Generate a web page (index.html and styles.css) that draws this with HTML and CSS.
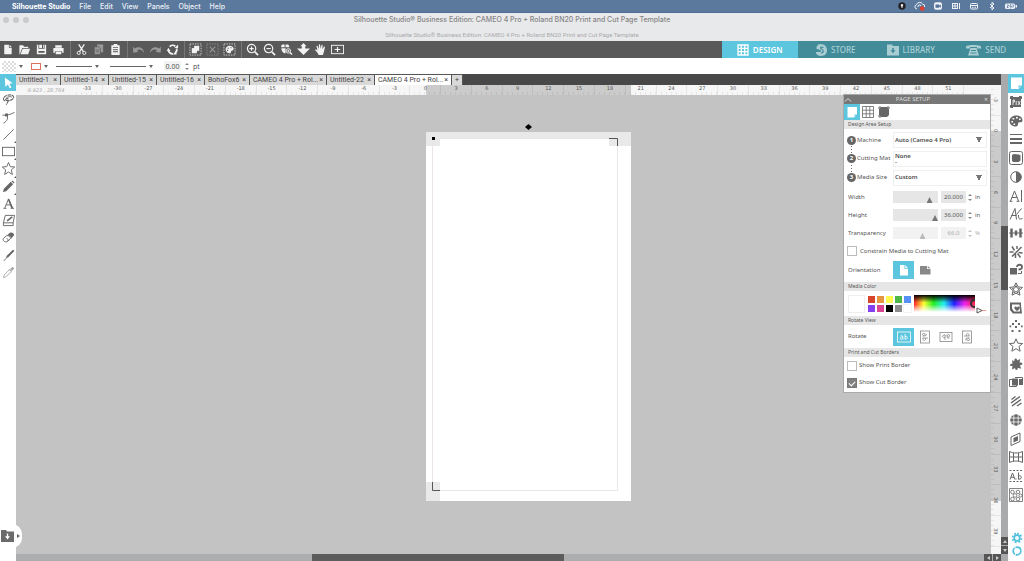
FILE: index.html
```html
<!DOCTYPE html>
<html lang="en">
<head>
<meta charset="utf-8">
<title>Silhouette Studio</title>
<link rel="stylesheet" href="styles.css">
</head>
<body>
<div class="app">
<header class="menubar">
  <nav class="menus">
    <button class="menu brand">Silhouette Studio</button><button class="menu">File</button><button class="menu">Edit</button><button class="menu">View</button><button class="menu">Panels</button><button class="menu">Object</button><button class="menu">Help</button>
  </nav>
  <div class="status">
    <svg viewBox="0 0 12 10"><circle class="ink" cx="6" cy="5" r="3.7"/><path class="f" d="M6 3a1.2 1.2 0 0 1 .7 2.2L6.400 7h-.8l-.3-1.800A1.200 1.200 0 0 1 6 3z"/></svg>
    <svg viewBox="0 0 12 10"><path d="M3 8a2.200 2.200 0 0 1-.5-4.300A3.300 3.300 0 0 1 8.500 3a2.400 2.400 0 0 1 2 3M4 6a1.500 1.500 0 0 1 3-1"/><circle class="red" cx="8.200" cy="7.500" r="2.300"/></svg>
    <svg viewBox="0 0 12 10"><rect class="f" x="2" y="1.200" width="8" height="7.600" rx="2"/><path class="navy" d="M3.500 3.500h3.500v1l1.800-1v3.200l-1.800-1v1H3.500z"/></svg>
    <svg viewBox="0 0 12 10"><rect class="f" x="2" y="2" width="6" height="6"/><path d="M9.500 2v6"/><path class="navy" d="M3 3h1.500v1.500H3zM5.500 3H7v1.500H5.500zM3 5.500h1.500V7H3zM5.500 5.500H7V7H5.500z"/></svg>
    <svg viewBox="0 0 12 10"><rect x="2.500" y="2.500" width="7" height="5.500" rx="1"/><path d="M2.500 4.500h7M4 6.300h1.500M6.500 6.300H8"/></svg>
    <svg viewBox="0 0 12 10"><path d="M4 3l4 4-2 1.800V1.200L8 3 4 7"/></svg>
    <svg class="battery" viewBox="0 0 14 10"><rect class="f" x="1" y="2.500" width="10" height="5.500" rx="1.500"/><path class="f" d="M11.500 4h1.500v2.500h-1.500z"/><path class="bolt" d="M3 4h1.500L3 6.500h1.500M7 3L5.800 5.300h1.700L6.500 7.500M8.500 4h1L8.800 6.500"/></svg>
  </div>
</header>
<div class="titlebar">
  <div class="lights"><i></i><i></i><i></i></div>
  <div class="titles">
    <h1>Silhouette Studio® Business Edition: CAMEO 4 Pro + Roland BN20 Print and Cut Page Template</h1>
    <p>Silhouette Studio® Business Edition: CAMEO 4 Pro + Roland BN20 Print and Cut Page Template</p>
  </div>
</div>
<div class="toolbar">
  <div class="tools">
    <div class="group">
      <button aria-label="New"><svg viewBox="0 0 14 14"><path class="f" d="M3.500 2h5v3h3v7h-8zM9.300 2l2.200 2.300H9.300z"/></svg></button>
      <button aria-label="Open"><svg viewBox="0 0 14 14"><path class="f" d="M1.500 12V2.500h4l1 1.500H11v1.500H4.500L2 12zM5 6.300h8L11 12H2.800z"/></svg></button>
      <button aria-label="Save"><svg viewBox="0 0 14 14"><path class="f" fill-rule="evenodd" d="M2 2h1.700v4.300h6.600V2H12v10H2zM3.700 8.500v2h6.600v-2zM4.500 2h3v3.500h-3zM8.700 2h.8v3.500h-.8z"/></svg></button>
      <button aria-label="Print"><svg viewBox="0 0 14 14"><path class="f" fill-rule="evenodd" d="M3.500 2.500h7V5h-7zM1.500 5.500h11v5h-1.700V8.800H3.200v1.700H1.500zM4 9.500h6V12H4z"/></svg></button>
    </div>
    <div class="group">
      <button aria-label="Cut"><svg viewBox="0 0 14 14"><path stroke-width="1.400" d="M4 1.500l5.200 8M10 1.500l-5.200 8"/><circle cx="4" cy="10.700" r="1.700"/><circle cx="10" cy="10.700" r="1.700"/></svg></button>
      <button class="dim" aria-label="Copy"><svg viewBox="0 0 14 14"><path class="f" d="M5.500 1.500H12v8.500H5.500z"/><path class="f edge" d="M2.500 4H7l2 2v6.500H2.500z"/><path class="edge" d="M4 7.500h3.500M4 9.500h3.500"/></svg></button>
      <button aria-label="Paste"><svg viewBox="0 0 14 14"><path class="f" fill-rule="evenodd" d="M5 1.200h4v1.300h2.500v10.300h-9V2.500H5zM4.300 4.500v1h5.400v-1zM4.300 6.700v1h5.400v-1zM4.300 9v1h5.400V9z"/></svg></button>
    </div>
    <div class="group">
      <button class="dim" aria-label="Undo"><svg viewBox="0 0 14 14"><path class="f" d="M1 4l.5 6.500 5.500-1.200L5.300 8c2.400-1.600 5-1.300 7.700 2.500C12.500 5 7.500 2.800 3 5.800z"/></svg></button>
      <button class="dim" aria-label="Redo"><svg viewBox="0 0 14 14"><path class="f" d="M13 4l-.5 6.500L7 9.300 8.700 8C6.300 6.400 3.700 6.700 1 10.500 1.500 5 6.500 2.800 11 5.800z"/></svg></button>
      <button aria-label="Sync"><svg viewBox="0 0 14 14"><path stroke-width="2" d="M4 4a4.300 4.300 0 0 1 6-.5M11.500 6a4.500 4.500 0 0 1-1.200 4.500M7.500 11.700A4.500 4.500 0 0 1 2.600 8"/><path class="f" d="M9 5.500h4V1.500zM11.500 12.500H7.500l3-4zM.8 8.500h4L2.500 5z"/></svg></button>
    </div>
    <div class="group">
      <button aria-label="Select all"><svg viewBox="0 0 14 14"><path class="dash" d="M1 1h12v12H1z"/><path class="f" d="M5.500 3h5.500v5.500H5.500z"/><path class="f" stroke="#595959" d="M3 5.500h5.500V11H3z"/></svg></button>
      <button class="dim" aria-label="Deselect"><svg viewBox="0 0 14 14"><path class="dash" d="M1 1h12v12H1z"/><path stroke-width="1.200" d="M4 4l6 6M10 4l-6 6"/></svg></button>
      <button aria-label="Select by color"><svg viewBox="0 0 14 14"><path class="dash" d="M1 1h12v12H1z"/><path class="f" fill-rule="evenodd" d="M7 3c3 0 4.500 1.500 4.500 3.500 0 1.500-1.200 1.800-2.300 1.800C8 8.500 9.500 11 7 11 4.500 11 2.800 9 2.800 7S4.500 3 7 3zM5 5v1.200h1.200V5zM8 4.500v1.200h1.200V4.500zM4.300 7.300v1.200h1.200V7.300z"/></svg></button>
    </div>
    <div class="group">
      <button aria-label="Zoom in"><svg viewBox="0 0 14 14"><circle cx="6" cy="6" r="4.500" stroke-width="1.300"/><path stroke-width="1.800" d="M9.500 9.500l3.500 3.500"/><path stroke-width="1.200" d="M6 3.700v4.600M3.700 6h4.600"/></svg></button>
      <button aria-label="Zoom out"><svg viewBox="0 0 14 14"><circle cx="6" cy="6" r="4.500" stroke-width="1.300"/><path stroke-width="1.800" d="M9.500 9.500l3.500 3.500"/><path stroke-width="1.200" d="M3.700 6h4.600"/></svg></button>
      <button aria-label="Zoom selection"><svg viewBox="0 0 14 14"><path class="f" d="M2.500 1.500H5v3.200H1.200C1.200 3 1.500 2 2.500 1.500zM6 1.500h2.500C9.600 2 10 3 10 4.700H6zM1.500 5.700H6V11H4.500C2.500 10 1.500 8 1.500 5.700z"/><circle cx="9" cy="8.500" r="2.400"/><path stroke-width="1.500" d="M10.700 10.200l2.300 2.300"/><path d="M7.800 8.500h2.400M9 7.300v2.400"/></svg></button>
      <button aria-label="Drag zoom"><svg viewBox="0 0 14 14"><path class="f" d="M7 0l3.300 3.500H8.800V6h5.200L7 13 0 6h5.200V3.500H3.700z"/></svg></button>
      <button aria-label="Pan"><svg viewBox="0 0 14 14"><path class="f" d="M5 13C4.300 10.500 2.500 9 1 7.500c.8-.9 1.800-.3 2.800.7L2.600 3.300c.8-.7 1.300-.2 1.500.5L5.300 6.500 5.200 1.700c.7-.7 1.300-.2 1.400.4l.6 4.200.9-4.200c.8-.5 1.300 0 1.200.7L9 6.800l1.800-3c.8-.3 1.200.2 1 .9C11 7 11 10 9.500 13z"/></svg></button>
      <button aria-label="Fit to window"><svg viewBox="0 0 14 14"><rect x=".5" y="2.500" width="13" height="9"/><path stroke-width="1.300" d="M7 4.300v5.400M4 7h6"/></svg></button>
    </div>
  </div>
  <nav class="modes">
    <a class="mode on" href="#design"><svg viewBox="0 0 12 12"><path stroke-width="1.300" d="M1 1h10v10H1zM4.300 1v10M7.700 1v10M1 4.300h10M1 7.700h10"/></svg>DESIGN</a>
    <a class="mode" href="#store"><svg viewBox="0 0 12 12"><path class="f" d="M5 0c5 0 7 3 7 6.300C12 10 9.300 12 6.200 12 3.300 12 1.200 10.500.700 8h4.200c1.500 0 1.700-1.500.2-2L1.500 4.800C1 3 3 0 5 0z"/><path class="tealstroke" d="M8.500 3.500C5.800 2.500 4.500 4 6.500 5s2.700 3.700-.5 4"/></svg>STORE</a>
    <a class="mode" href="#library"><svg viewBox="0 0 12 12"><path class="f" fill-rule="evenodd" d="M0 .5h5L6 2h6v9.500H0zM5.200 4v2.200H3.500L6 9.300l2.500-3.100H6.800V4z"/></svg>LIBRARY</a>
    <a class="mode" href="#send"><svg class="wide" viewBox="0 0 15 12"><path class="f" fill-rule="evenodd" d="M0 4.500V2.500C1.500.5 13.500.5 15 2.500v2h-4V3H4v1.500zM4.500 4h6l2.500 7.500H2zM5 6v1h5V6zM4.500 8.500v1h6v-1z"/></svg>SEND</a>
  </nav>
</div>
<div class="options">
  <button class="pattern" aria-label="Fill"></button><i class="caret"></i>
  <button class="linecolor" aria-label="Line color"></button><i class="caret"></i>
  <button class="line" aria-label="Line style"></button><i class="caret wide"></i>
  <button class="line" aria-label="Line weight"></button><i class="caret wide"></i>
  <input class="thick" id="thick" value="0.00"><span class="spin"><button aria-label="Up"></button><button aria-label="Down"></button></span><label for="thick">pt</label>
</div>
<div class="work">
  <aside class="left">
    <div class="lefttools">
      <button class="on" aria-label="Select"><svg viewBox="0 0 14 14"><path class="f" d="M3 1.500l8.500 6.300-3.600.5 2.200 4-1.700.8-2-4L3.600 11.500z"/></svg></button>
      <button aria-label="Lasso"><svg viewBox="0 0 14 14"><path stroke-width="1.200" d="M3.500 8.500C0 7.500 1.500 4 5 2.700S12.500 2 12.500 4.500 8.500 8.700 5.500 8.200 4 6 5.700 6s1.500 3.500-1.200 6.500" stroke-dasharray="4 .6"/><path d="M4.500 5.500C6 4 9 3.500 10.500 4.300"/></svg></button>
      <button aria-label="Edit points"><svg viewBox="0 0 14 14"><path d="M.5 4.500C5 4.500 9 4 13.500 1.500M5 4c2 3 1 7-3.500 9"/><path class="f" d="M3.300 2.700h3.200v3.200H3.300z"/></svg></button>
      <button class="more" aria-label="Line"><svg viewBox="0 0 14 14"><path d="M1.500 12.500l11-11"/></svg></button>
      <button class="more" aria-label="Rectangle"><svg viewBox="0 0 14 14"><rect x=".5" y="2.500" width="13" height="9"/></svg></button>
      <button class="more" aria-label="Star"><svg viewBox="0 0 14 14"><path d="M7 .5l1.900 4.500 4.800.4-3.700 3.100 1.200 4.900L7 10.800l-4.200 2.600L4 8.500.300 5.400 5.100 5z"/></svg></button>
      <button class="more" aria-label="Freehand"><svg viewBox="0 0 14 14"><path class="f" d="M1 13l1-3.500L9.500 2l2.500 2.500-7.500 7.500zM10.200 1.300l1-.8 2.300 2.300-.8 1z"/></svg></button>
      <button aria-label="Text"><svg viewBox="0 0 14 14"><path d="M3 12L7 2l4.500 10M4.500 8.500h5.300M1.500 12.200h3.200M9.300 12.200h3.700"/><path stroke-width="1.700" d="M7 2.500l3.900 9.500"/></svg></button>
      <button aria-label="Sketch"><svg viewBox="0 0 14 14"><path d="M3.500 1.500h10l-1.500 8H1.500zM1.500 9.500v3h10.500v-3"/><path stroke-width="1.800" d="M5.500 7.500l5.500-4.500"/></svg></button>
      <button aria-label="Eraser"><svg viewBox="0 0 14 14"><path class="f" d="M5.500 4.500L8.500 2c2-1 4.500.5 4.500 2.500l-3.500 4c1-2-1.500-4-4-4z"/><path d="M5 5L1.500 8c-1.500 2 1.500 4.500 4 3.500L9 8.500C9.500 6 7 4.500 5 5zM5 8c1.500.5 2 1.800 1 3"/></svg></button>
      <button aria-label="Knife"><svg viewBox="0 0 14 14"><path stroke-width="2.200" stroke-linecap="round" d="M12 2L6 8"/><path d="M7 6.500L4.500 10 2 12.800"/></svg></button>
      <button class="pale" aria-label="Eyedropper"><svg viewBox="0 0 14 14"><path d="M1.500 12.500l1-3L8 4l2 2-5.500 5.500zM7.500 3.500L10.500 6.500"/><path class="f" d="M8.500 3.300l2.300-2c1-.7 2.800.8 2 2L10.700 5.500z"/></svg></button>
    </div>
    <button class="drawer" aria-label="Open library"><svg viewBox="0 0 13 12"><path class="f" fill-rule="evenodd" d="M0 0h5l1 1.500h7V12H0zM5.800 3.500v2.700H4l2.500 3.300L9 6.200H7.200V3.500z"/></svg><i></i></button>
  </aside>
  <main class="center">
    <div class="doctabs">
      <button class="tab w1">Untitled-1<b>×</b></button><button class="tab w2">Untitled-14<b>×</b></button><button class="tab w2">Untitled-15<b>×</b></button><button class="tab w2">Untitled-16<b>×</b></button><button class="tab w1">BohoFox6<b>×</b></button><button class="tab w3">CAMEO 4 Pro + Rol...<b>×</b></button><button class="tab w2">Untitled-22<b>×</b></button><button class="tab w3 on">CAMEO 4 Pro + Rol...<b>×</b></button><button class="tab add">+</button>
    </div>
    <div class="hruler">
      <span class="coords">-9.923 , 28.764</span>
      <div class="hnums"><span>-33</span><span>-30</span><span>-27</span><span>-24</span><span>-21</span><span>-18</span><span>-15</span><span>-12</span><span>-9</span><span>-6</span><span>-3</span><span>0</span><span>3</span><span>6</span><span>9</span><span>12</span><span>15</span><span>18</span><span>21</span><span>24</span><span>27</span><span>30</span><span>33</span><span>36</span><span>39</span><span>42</span><span>45</span><span>48</span><span>51</span></div>
    </div>
    <div class="stage">
      <div class="canvas">
        <svg class="sheet" viewBox="0 0 206 378">
          <path class="white" d="M0 9h205v369H0z"/>
          <path class="shade" d="M0 9h205v14h-22v-7H14v7H0zM0 359h14v19H0z"/>
          <path class="cutline" d="M6.500 15.500h185v352H6.500z"/>
          <path class="black" d="M6 14h3v3H6z"/>
          <path class="mark" d="M183 15.500h8.500V23M6.500 359v8.500H14"/>
          <path class="black" d="M102.500 1l3.500 3-3.500 3-3.500-3z"/>
        </svg>
        <section class="panel">
          <header class="phead"><svg viewBox="0 0 8 6"><path d="M1 4.500L4 1.500l3 3"/></svg><h2>PAGE SETUP</h2><button aria-label="Close">×</button></header>
          <div class="ptabs">
            <button class="on" aria-label="Page"><svg viewBox="0 0 12 12"><path class="f" d="M1.500 1h9.500v7L8 11.500H1.500z"/><path class="cyan" d="M8 11V8h3"/></svg></button>
            <button aria-label="Grid"><svg viewBox="0 0 12 12"><path stroke-width=".8" d="M.5.5h11v11H.5zM4.200.5v11M7.800.5v11M.5 4.200h11M.5 7.800h11"/></svg></button>
            <button aria-label="Registration marks"><svg viewBox="0 0 12 12"><path class="f" d="M1 3l2-2h6l2 2v6l-2 2H3L1 9z"/><path d="M1 3V1h2M9 1h2v2M1 9v2h2"/></svg></button>
          </div>
          <h3>Design Area Setup</h3>
          <div class="fields">
            <div class="row"><label for="machine"><i class="num">1</i>Machine</label><select id="machine"><option>Auto (Cameo 4 Pro)</option></select></div>
            <div class="row tall dots"><label for="mat"><i class="num">2</i>Cutting Mat</label><button id="mat" class="mat">None<br>-</button></div>
            <div class="row tall dots"><label for="media"><i class="num">3</i>Media Size</label><select id="media"><option>Custom</option></select></div>
            <div class="row"><label for="w">Width</label><input type="range" aria-label="Width slider" value="86"><input class="val" id="w" value="20.000"><span class="spin"><button aria-label="Up"></button><button aria-label="Down"></button></span><span class="unit">in</span></div>
            <div class="row"><label for="h">Height</label><input type="range" aria-label="Height slider" value="100"><input class="val" id="h" value="36.000"><span class="spin"><button aria-label="Up"></button><button aria-label="Down"></button></span><span class="unit">in</span></div>
            <div class="row off"><label for="t">Transparency</label><input type="range" aria-label="Transparency slider" value="68" disabled><input class="val" id="t" value="66.0" disabled><span class="spin"><button aria-label="Up"></button><button aria-label="Down"></button></span><span class="unit">%</span></div>
            <div class="row check"><input type="checkbox" id="c1"><label for="c1">Constrain Media to Cutting Mat</label></div>
            <div class="row high"><span class="lab">Orientation</span><div class="picks"><button class="on" aria-label="Portrait"><svg viewBox="0 0 12 12"><path class="f" d="M2 1h4.500v4H10v6.500H2zM7.300 1L10 4.200H7.300z"/></svg></button><button aria-label="Landscape"><svg viewBox="0 0 12 12"><path class="f" d="M1 2h7v3h3.500v5.500H1zM8.800 2l2.700 2.200H8.800z"/></svg></button></div></div>
          </div>
          <h3>Media Color</h3>
          <div class="colors">
            <i class="current"></i>
            <div class="swatches"><i class="c1"></i><i class="c2"></i><i class="c3"></i><i class="c4"></i><i class="c5"></i><i class="c6"></i><i class="c7"></i><i class="c8"></i><i class="c9"></i><i class="c10"></i></div>
            <div class="spectrum"><i></i></div>
            <svg class="shadeslider" viewBox="0 0 12 20"><path d="M2 14v5l5-2.500z"/><path class="redline" d="M7 16.500h4"/></svg>
          </div>
          <h3>Rotate View</h3>
          <div class="row rotate"><span class="lab">Rotate</span><div class="picks">
            <button class="on" aria-label="0 degrees"><svg viewBox="0 0 14 14"><rect x=".5" y="2" width="13" height="10"/><path d="M3.500 6c2-1 2.500 0 2.500 3.500M6 7C4 6.500 3 7.500 3.500 9S6 8.500 6 8M8 4v5.500M8 6.500c3-1 3.500 3 0 2.500"/></svg></button>
            <button aria-label="90 degrees"><svg viewBox="0 0 14 14"><rect x="2.500" y="1" width="9" height="12"/><path d="M8 3.500c1 2 0 2.500-3.500 2.500M7 6c.5-2-.5-3-2-2.500S5.500 6 6 6M10 8H4.500M7.500 8c1 3-3 3.500-2.500 0"/></svg></button>
            <button aria-label="180 degrees"><svg viewBox="0 0 14 14"><rect x="1" y="2.500" width="12" height="9"/><path d="M10.500 8c-2 1-2.500 0-2.500-3.500M8 7c2 .5 3-.5 2.500-2S8 5.500 8 6M6 10V4.500M6 7.500c-3 1-3.500-3 0-2.500"/></svg></button>
            <button aria-label="270 degrees"><svg viewBox="0 0 14 14"><rect x="2.500" y="1" width="9" height="12"/><path d="M6 10.500C5 8.500 6 8 9.500 8M7 8c-.5 2 .5 3 2 2.500S8.500 8 8 8M4 6h5.500M6.500 6c-1-3 3-3.500 2.500 0"/></svg></button>
          </div></div>
          <h3>Print and Cut Borders</h3>
          <div class="row check"><input type="checkbox" id="c2"><label for="c2">Show Print Border</label></div>
          <div class="row check"><input type="checkbox" id="c3" checked><label for="c3">Show Cut Border</label></div>
        </section>
      </div>
    </div>
    <div class="hscroll"><i class="thumb"></i><span class="arrows"><button class="al" aria-label="Left"></button><button class="ar" aria-label="Right"></button></span></div>
  </main>
  <div class="vruler"><div class="vnums"><span>-3</span><span>0</span><span>3</span><span>6</span><span>9</span><span>12</span><span>15</span><span>18</span><span>21</span><span>24</span><span>27</span><span>30</span><span>33</span><span>36</span><span>39</span></div></div>
  <div class="vscroll"><i class="thumb"></i><span class="arrows"><button class="au" aria-label="Up"></button><button class="ad" aria-label="Down"></button></span></div>
  <aside class="right">
    <div class="righttools">
      <button class="on" aria-label="Page setup"><svg viewBox="0 0 14 14"><path class="f" d="M2 1.500h11V9l-3.500 4H2z"/><path class="cyan" d="M9 12.500V9h4"/></svg></button>
      <button aria-label="Pixscan"><svg viewBox="0 0 14 14"><path class="f" d="M2 2h10v10H2z"/><path d="M1.500 4V1.500H4M10 1.500h2.500V4M1.500 10v2.500H4"/><path class="w" d="M4 10V5h1.500v2H4M7.200 6v4M9 6l2.200 4M11.200 6L9 10"/></svg></button>
      <button aria-label="Fill"><svg viewBox="0 0 14 14"><path class="f" fill-rule="evenodd" d="M7 1.500c4 0 6.500 2 6.500 4.800 0 2-1.800 2.200-3.300 2-2 0 0 4.200-3.500 4.200C3 12.500.5 10 .5 7S3.500 1.500 7 1.500zM3.500 4v1.600h1.800V4zM7 3v1.600h1.800V3zM10 4.500v1.600h1.700V4.500zM2.300 7v1.600H4V7zM4.500 9.500V11h1.600V9.500z"/></svg></button>
      <button aria-label="Line style"><svg viewBox="0 0 14 14"><path d="M1 2.500h12"/><path stroke-width="2" d="M1 7h12"/><path stroke-width="2" d="M1 11h12"/></svg></button>
      <button aria-label="Trace"><svg viewBox="0 0 14 14"><rect x=".5" y=".5" width="13" height="13" rx="2"/><path class="f" d="M3 4l2-1 5 .5 1.500 1v5l-2 1.500H4L3 9.500z"/></svg></button>
      <button aria-label="Contrast"><svg viewBox="0 0 14 14"><circle cx="7" cy="7" r="5.300"/><path class="f" d="M7 1.700a5.300 5.300 0 0 1 0 10.600z"/></svg></button>
      <button aria-label="Text style"><svg viewBox="0 0 14 14"><path d="M1.500 12L5.500 2l4 10M3 8.500h5M.5 12.300h3M7.500 12.300h3M12.500 1v12"/></svg></button>
      <button aria-label="Sketch text"><svg viewBox="0 0 14 14"><path d="M1 12.500L6 1.500l1.500 11M2.500 8.500h5M7.500 7.500L12.500 1.500M9.500 8c0 3 0 5 4 3.500"/></svg></button>
      <button aria-label="Align"><svg viewBox="0 0 14 14"><path stroke-width="2.500" d="M2.500 2.500v9M7 4.500v5M11.500 2.500v9"/><path d="M0 7h14"/></svg></button>
      <button aria-label="Transform"><svg viewBox="0 0 14 14"><path stroke-width="1.500" d="M3 1.500l2.500 4M12.500 2L3 11.500M.5 7h4M9.500 7.500l4 .5M6.500 9v4M8.500 8.500l3 4M8 1v3"/></svg></button>
      <button aria-label="Replicate"><svg viewBox="0 0 14 14"><path class="f" d="M1 5h7v6.500H1z"/><path stroke-width="1.800" d="M8 4c0-3 5-3 5 0 0 2-2 2.500-3.500 2.500"/><path d="M9 10.500h3.500V8"/></svg></button>
      <button aria-label="Offset"><svg viewBox="0 0 14 14"><path d="M7 .8l2 4 4.500.7L10 8.700l1 4.500-4-2-4 2 1-4.500L.5 5.500 5 4.800z"/><path d="M7 3.500l1.200 2.500 2.500.5-1.900 1.800.4 2.500L7 9.500l-2.200 1.300.4-2.500-1.900-1.800L5.800 6z"/></svg></button>
      <button aria-label="Modify"><svg viewBox="0 0 14 14"><path class="f" fill-rule="evenodd" d="M1 1.500h11v3l1 8H4L1 9zM3 3.500v4l2 3h6l-.5-7z"/><path class="f" d="M8 10C5.500 8.500 4.500 6.500 6 5.700c1-.5 1.700.3 2 1 .3-.7 1.200-1.500 2.200-1C11.500 6.500 10.500 8.500 8 10z"/></svg></button>
      <button aria-label="Rhinestones"><svg viewBox="0 0 14 14"><path class="f" d="M6 1h2v2H6zM3 4h2v2H3zM9 4h2v2H9zM.500 6.500h1.700v1.700H.500zM12 6.500h1.700v1.700H12zM6 7h2v2H6zM2.500 11h2v2h-2zM9.500 11h2v2h-2z"/></svg></button>
      <button aria-label="Star"><svg viewBox="0 0 14 14"><path d="M7 .8l1.900 4.400 4.700.3-3.600 3 1.200 4.700L7 10.700l-4.200 2.500L4 8.500l-3.600-3 4.700-.3z"/></svg></button>
      <button aria-label="Puzzle"><svg viewBox="0 0 14 14"><path class="f" d="M3 3.200l2.500 1C4.700 1 8.300.500 8 3.500L11.200 2 10.500 5.500c3.800-.5 3.800 3 .3 2.700l1.500 3.500-3.500-1c.3 3-3 3-2.700.3L3 12.500l.5-3.700C.5 10 0 6.500 3.500 6.500z"/></svg></button>
      <button aria-label="Layers"><svg viewBox="0 0 14 14"><path d="M.5 4.500h7v7h-7zM6 2.500h7.500v7"/><path class="f" d="M3 3.500h6v7H3z"/><path class="f" d="M10 4h4v6h-4z"/></svg></button>
      <button aria-label="Hatch"><svg viewBox="0 0 14 14"><path stroke-width="1.500" d="M2.500 5.500l4-3M2 9l9-6.500M3 12L12 5.500M8 12l4.500-3"/></svg></button>
      <button aria-label="Warp"><svg viewBox="0 0 14 14"><circle class="f" cx="7" cy="7" r="5.800"/><path class="w" d="M1 5h12M1 9h12M4.800 1v12M9.200 1v12"/></svg></button>
      <button aria-label="Shear"><svg viewBox="0 0 14 14"><path d="M2 5l9-4v8.500L2 13.500z"/><path class="f" d="M4.500 6l4.500-2v4.500l-4.500 2z"/></svg></button>
      <button aria-label="Mesh"><svg viewBox="0 0 14 14"><path d="M.5 1.500c4 2 9 2 13 0v11c-4-2-9-2-13 0zM4.500 3v8.500M9.500 3v8.500M.5 7h13"/></svg></button>
      <button aria-label="Glyphs"><svg viewBox="0 0 14 14"><path stroke-dasharray="2 1.500" d="M.5 1.500h13M.5 12.500h13"/><path d="M1 10.500L3.500 4 6 10.500M2 8.300h3M9.500 3.500v7M9.500 7c3.500-1.500 4 4 0 3M7 9.500v1"/></svg></button>
      <button aria-label="Pattern"><svg viewBox="0 0 14 14"><path stroke-width=".8" d="M.5.5h13v13H.5z"/><g stroke-width=".8"><circle cx="3.500" cy="4" r="1.800"/><circle cx="9" cy="4" r="1.800"/><circle cx="6" cy="7.500" r="1.800"/><circle cx="11.500" cy="7.500" r="1.500"/><circle cx="3.500" cy="11" r="1.800"/><circle cx="9" cy="11" r="1.800"/></g></svg></button>
    </div>
    <div class="sys">
      <button aria-label="Preferences"><svg viewBox="0 0 14 14"><circle cx="7" cy="7" r="3.300" stroke-width="2"/><path stroke-width="2" stroke-dasharray="2.100 2" d="M7 1.800a5.200 5.200 0 1 1-.01 0z"/></svg></button>
      <button aria-label="Updates"><svg viewBox="0 0 14 14"><circle cx="7" cy="7" r="4.500" stroke-width="2" stroke-dasharray="8.400 1"/></svg></button>
    </div>
  </aside>
</div>
</div>
</body>
</html>
```
FILE: styles.css
```css
* { box-sizing: border-box; }
body { margin: 0; font: 7px/9px "Noto Sans", "Open Sans", sans-serif; color: #555; }
button, input, select { font: inherit; color: inherit; border: 0; padding: 0; margin: 0; background: none; border-radius: 0; min-width: 0; }
svg { display: block; flex: none; fill: none; stroke: currentColor; }
.f { fill: currentColor; stroke: none; }
h1, h2, h3, p { margin: 0; font-weight: 400; }
.app { display: flex; flex-direction: column; height: 100vh; overflow: hidden; background: #fff; }

.menubar { display: flex; justify-content: space-between; align-items: center; flex: none; height: 13px; padding: 0 6px 0 12px; background: #5b799d; color: #eef2f7; font-family: Inter, sans-serif; border-bottom: 1px solid #4f6d92; }
.menus { display: flex; gap: 9px; }
.menu { font-weight: 500; }
.brand { font-weight: 700; color: #fff; }
.status { display: flex; gap: 6px; }
.status svg { width: 12px; height: 10px; }
.status .battery { width: 14px; }
.ink { fill: #222; stroke: none; }
.red { fill: #e0402c; stroke: none; }
.navy { fill: #54729a; stroke: none; }
.bolt { stroke: #54729a; stroke-width: 0.8; }

.titlebar { display: grid; grid-template-columns: 32px 1fr 32px; flex: none; height: 28px; background: #e8e9eb; }
.lights { display: flex; gap: 4px; padding: 4px 0 0 3px; }
.lights i { flex: none; width: 6px; height: 6px; border-radius: 50%; background: #c9cacc; }
.titles { text-align: center; padding-top: 2px; color: #aaa; font-family: Inter, sans-serif; }
.titles h1 { font-size: 7px; line-height: 9px; font-weight: 500; color: #858585; }
.titles p { font-family: Roboto, sans-serif; font-size: 6px; line-height: 8px; padding-top: 7px; }

.toolbar { display: flex; justify-content: space-between; flex: none; height: 17px; background: #595959; color: #f2f2f2; }
.tools, .group { display: flex; align-items: center; }
.group { gap: 2px; height: 17px; }
.group + .group { border-left: 1px solid #777; margin-left: 4px; padding-left: 3px; }
.group button { width: 15px; height: 15px; display: grid; place-items: center; }
.group svg { width: 13px; height: 13px; }
.dim { color: #999; }
.edge { stroke: #595959; stroke-width: 0.8; }
.dash { stroke-dasharray: 1.5 1.2; stroke-width: 0.8; }
.modes { display: flex; width: 302px; background: #428c9a; font-weight: 500; font-size: 8px; }
.mode { flex: 1; display: flex; align-items: center; justify-content: center; gap: 4px; color: #a9cdd3; text-decoration: none; }
.mode.on { background: #5bc6de; color: #fff; font-weight: 600; }
.mode svg { width: 12px; height: 12px; }
.mode .wide { width: 15px; }
.tealstroke { stroke: #428c9a; stroke-width: 1.2; }

.options { display: flex; align-items: center; flex: none; height: 16px; padding-left: 2px; }
.pattern { width: 14px; height: 11px; background: repeating-conic-gradient(#dcdcdc 0 25%, #fff 0 50%) 0 0 / 4px 4px; }
.linecolor { width: 10px; height: 7px; border: 1px solid #e0705f; }
.line { width: 36px; height: 9px; background: linear-gradient(#666, #666) center / 100% 1px no-repeat; }
.caret { border: 2px solid transparent; border-top: 3px solid #666; border-bottom: 0; margin: 0 8px 0 3px; }
.caret.wide { margin-right: 11px; }
.thick { width: 17px; height: 10px; background: #f3f3f3; text-align: center; }
.spin { display: flex; flex-direction: column; gap: 3px; margin: 0 4px; }
.spin button { border: 2px solid transparent; border-bottom: 2px solid #888; border-top: 0; width: 4px; }
.spin button + button { border-bottom: 0; border-top: 2px solid #888; }

.work { display: flex; flex: 1; min-height: 0; }
.left { flex: none; width: 16px; display: flex; flex-direction: column; justify-content: space-between; color: #666; z-index: 2; }
.lefttools { display: grid; grid-auto-rows: 1fr; height: 207px; }
.lefttools button { display: grid; place-items: center; position: relative; }
.lefttools svg { width: 13px; height: 13px; }
.lefttools .on, .righttools .on { background: #5bc6de; color: #fff; }
.more::after { content: ""; position: absolute; right: 0; bottom: 0; border: 1px solid #555; border-left-color: transparent; border-top-color: transparent; }
.pale { color: #aaa; }
.drawer { display: flex; align-items: center; gap: 3px; width: 22px; height: 24px; margin-bottom: 13px; padding-left: 1px; background: #fff; border-radius: 0 10px 10px 0; color: #6b6b6b; }
.drawer svg { width: 13px; height: 12px; }
.drawer i { border: 2px solid transparent; border-left: 3px solid #666; border-right: 0; }

.center { flex: 1; min-width: 0; display: flex; flex-direction: column; }
.doctabs { display: flex; flex: none; height: 11px; background: #484848; margin-right: -10px; font-family: Roboto, sans-serif; }
.tab { display: flex; justify-content: space-between; align-items: center; padding: 0 3px; background: #d9d9d9; border: 1px solid #555; border-width: 1px 1px 0 0; color: #444; white-space: nowrap; }
.tab b { font-weight: 400; }
.w1 { width: 45px; }
.w2 { width: 48px; }
.w3 { width: 77px; }
.add { width: 11px; }
.tab.on { background: #fff; }
.hruler { position: relative; flex: none; height: 10px; margin-right: -10px; font: 5px/7px "DejaVu Sans", sans-serif; background: linear-gradient(90deg, #f6f6f6 410px, #cbcbcb 410px 615px, #f6f6f6 615px); }
.hnums { display: flex; padding: 0 37px 0 56px; }
.hnums span { flex: 1; text-align: center; height: 10px; background: repeating-linear-gradient(90deg, transparent 0 4px, #0001 4px 5px) bottom / 100% 3px no-repeat; border-right: 1px solid #0001; }
.coords { position: absolute; left: 10px; top: 2px; color: #aaa; font-style: italic; }
.stage { flex: 1; min-height: 0; display: flex; }
.canvas { position: relative; flex: 1; background: #c3c3c3; }
.sheet { position: absolute; left: 410px; top: 28px; width: 206px; height: 378px; }
.white { fill: #fff; stroke: none; }
.shade { fill: #e9e9e9; stroke: none; }
.cutline { stroke: #ece5e5; }
.black { fill: #000; stroke: none; }
.mark { stroke: #555; }

.hscroll { flex: none; display: flex; height: 7px; background: #acadae; padding-left: 296px; margin-right: -10px; justify-content: space-between; }
.hscroll .thumb { width: 252px; background: #5c5c5c; }
.arrows { display: flex; gap: 1px; }
.arrows button { display: grid; place-items: center; width: 8px; height: 7px; background: #555; }
.arrows button::before { content: ""; border: 2px solid transparent; }
.arrows .al::before { border-right: 3px solid #ccc; border-left: 0; }
.arrows .ar::before { border-left: 3px solid #ccc; border-right: 0; }
.arrows .au::before { border-bottom: 3px solid #ccc; border-top: 0; }
.arrows .ad::before { border-top: 3px solid #ccc; border-bottom: 0; }
.vruler { flex: none; width: 10px; margin: 11px 0 7px; background: linear-gradient(#f6f6f6 46px, #cbcbcb 46px 416px, #f6f6f6 416px); font: 5px/6px "DejaVu Sans", sans-serif; z-index: 1; }
.vnums { display: grid; grid-auto-rows: 1fr; height: 462px; }
.vnums span { writing-mode: vertical-rl; text-align: center; width: 10px; line-height: 10px; background: repeating-linear-gradient(transparent 0 4px, #0001 4px 5px) left / 3px 100% no-repeat; border-bottom: 1px solid #0001; }
.vscroll { flex: none; display: flex; flex-direction: column; justify-content: space-between; width: 7px; background: #a9aaab; padding: 152px 0 7px; }
.vscroll .thumb { height: 64px; background: #555; }
.vscroll .arrows { flex-direction: column; }
.vscroll .arrows button { width: 7px; height: 8px; }

.right { flex: none; width: 16px; display: flex; flex-direction: column; justify-content: space-between; color: #666; }
.righttools { display: grid; grid-auto-rows: 1fr; height: 430px; }
.righttools button { display: grid; place-items: center; }
.righttools svg { width: 14px; height: 14px; }
.cyan { fill: #5bc6de; stroke: #fff; }
.w { stroke: #fff; stroke-width: 0.8; }
.sys { display: grid; gap: 1px; justify-items: end; color: #4fc0dc; padding: 0 1px 4px 0; }
.sys svg { width: 12px; height: 12px; }

.panel { position: absolute; right: 1px; top: 0; width: 146px; padding-bottom: 1px; background: #fff; outline: 1px solid #aaa; }
.phead { display: grid; grid-template-columns: 8px 1fr 16px; align-items: center; height: 9px; background: #777; color: #ddd; text-align: center; }
.phead h2 { font-size: 6px; line-height: 9px; }
.phead svg { width: 8px; height: 6px; }
.phead button { line-height: 8px; text-align: right; padding-right: 2px; }
.ptabs { display: flex; height: 16px; color: #666; }
.ptabs button { width: 16px; display: grid; place-items: center; }
.ptabs svg { width: 12px; height: 12px; }
.ptabs .on, .picks .on { background: #5bc6de; color: #fff; }
.panel h3 { background: #e6e6e6; font-size: 5px; line-height: 9px; padding-left: 4px; }
.fields { display: flex; flex-direction: column; padding: 2px 0; }
.row { display: flex; align-items: center; height: 18px; padding-left: 4px; position: relative; font-size: 6px; white-space: nowrap; }
.row > label, .lab { width: 45px; flex: none; display: flex; align-items: center; gap: 1px; }
.tall { height: 19px; }
.tall + .row:not(.tall) { margin-top: 1px; }
.high { height: 20px; }
.num { width: 9px; height: 9px; border-radius: 50%; background: #666; color: #fff; font: 700 6px/9px "Noto Sans", sans-serif; text-align: center; flex: none; margin-left: -1px; }
.dots::before { content: ""; position: absolute; left: 7px; top: -3px; width: 1px; height: 7px; background: repeating-linear-gradient(#666 0 1px, transparent 1px 3px); }
.row select, .mat { width: 94px; height: 16px; font-weight: 600; text-align: left; border: 1px solid #f0f0f0; appearance: none; padding-left: 1px; color: #4c4c4c; }
.row select { background: linear-gradient(to top right, transparent 50%, #777 50%) 82px 4px / 3px 6px no-repeat, linear-gradient(to top left, transparent 50%, #777 50%) 85px 4px / 3px 6px no-repeat, #fff; }
.mat { line-height: 6px; }
.row input[type=range] { appearance: none; width: 45px; height: 12px; background: #e6e6e6; margin-right: 3px; overflow: hidden; }
.row input[type=range]::-webkit-slider-thumb { appearance: none; width: 6px; height: 6px; margin-top: 6px; background: #777; clip-path: polygon(50% 0, 100% 100%, 0 100%); }
.val { width: 25px; height: 12px; background: #e6e6e6; text-align: center; }
.row .spin { margin: 0 3px 0 2px; }
.off input, .off .spin, .off .unit { opacity: 0.5; }
.check > label { width: auto; padding-left: 3px; }
.check input { appearance: none; width: 10px; height: 10px; border: 1px solid #bbb; background: #fff; flex: none; margin-left: -1px; }
.check input:checked { border-color: #777; background: #808080; display: grid; place-items: center; }
.check input:checked::before { content: ""; width: 5px; height: 3px; border: solid #fff; border-width: 0 0 1px 1px; rotate: -45deg; }
.panel > .check { height: 17px; }
.panel > .check > label { padding-left: 2px; }
.picks { display: flex; }
.picks button { width: 21px; height: 18px; display: grid; place-items: center; color: #888; }
.picks svg { width: 12px; height: 12px; }
.rotate { height: 23px; }
.rotate svg { width: 14px; height: 14px; stroke-width: 0.8; }
.colors { display: flex; align-items: center; height: 25px; padding: 0 3px 0 4px; }
.current { width: 17px; height: 18px; border: 1px solid #eee; margin-right: 3px; }
.swatches { display: grid; grid-template-columns: repeat(5, 7px); grid-auto-rows: 7px; gap: 2px; margin-right: 3px; }
.c1 { background: #d8432c; } .c2 { background: #e5953f; } .c3 { background: #fffb52; } .c4 { background: #4db849; } .c5 { background: #5591f5; }
.c6 { background: #8440f0; } .c7 { background: #db4593; } .c8 { background: #000; } .c9 { background: #8c8c8c; } .c10 { background: #fff; outline: 1px solid #f3f3f3; }
.spectrum { position: relative; flex: 1; height: 17px; background: linear-gradient(#000, transparent 45% 55%, #fff), linear-gradient(90deg, #f22, #ff3 16%, #2e2 32%, #2ee 49%, #22f 66%, #e2e 83%, #f24); overflow: hidden; }
.spectrum i { position: absolute; right: -4px; top: 4px; width: 9px; height: 9px; border: 2px solid #333; border-radius: 50%; }
.shadeslider { width: 12px; height: 20px; }
.redline { stroke: #f09090; }
```
